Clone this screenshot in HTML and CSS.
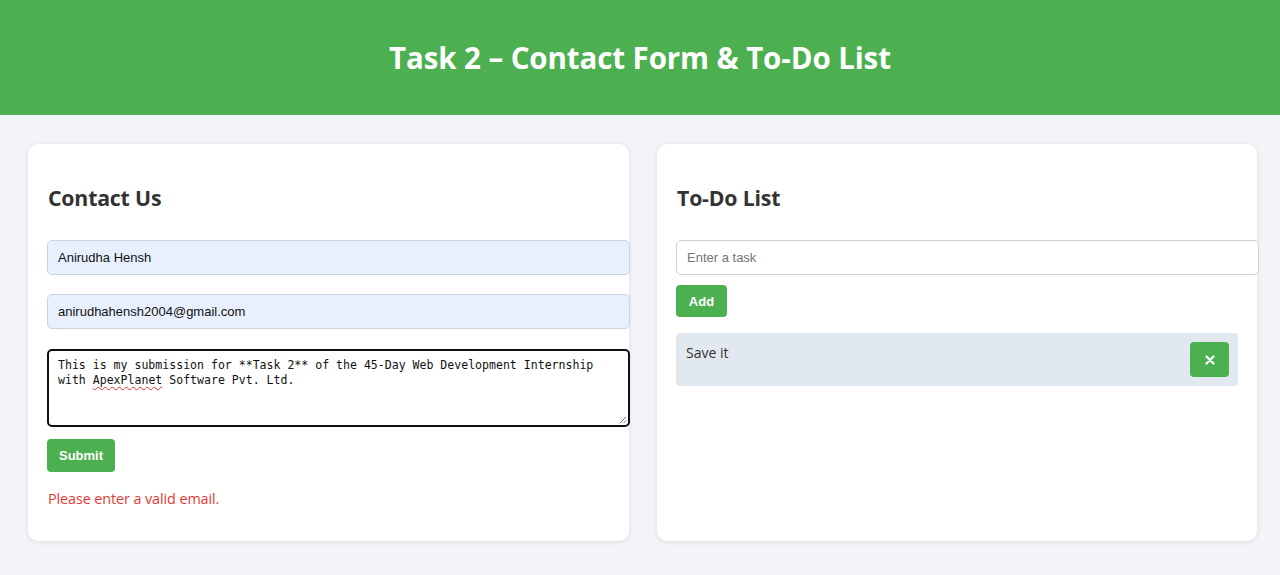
FILE: index.html
```html
<!DOCTYPE html>
<html lang="en">
<head>
<meta charset="utf-8">
<title>Task 2</title>
<link rel="stylesheet" href="styles.css">
</head>
<body>
<header class="top">
  <h1 class="title">Task 2 – Contact Form &amp; To-Do List</h1>
</header>
<main class="main">
  <section class="card">
    <h2 class="card-title">Contact Us</h2>
    <form class="form">
      <input class="field filled" type="text" value="Anirudha Hensh">
      <input class="field filled" type="text" value="anirudhahensh2004@gmail.com">
      <div class="area" role="textbox">This is my submission for **Task 2** of the 45-Day Web Development Internship<br>with <span class="spell">ApexPlanet</span> Software Pvt. Ltd.<svg class="grip" width="8" height="8" viewBox="0 0 8 8"><path d="M7 1L1 7M7 4.5L4.5 7" stroke="#777" stroke-width="1" fill="none"/></svg></div>
      <button class="btn submit" type="button">Submit</button>
    </form>
    <p class="error">Please enter a valid email.</p>
  </section>
  <section class="card">
    <h2 class="card-title">To-Do List</h2>
    <input class="field task" type="text" placeholder="Enter a task">
    <button class="btn add" type="button">Add</button>
    <ul class="list">
      <li class="item">
        <span class="item-text">Save it</span>
        <button class="btn del" type="button" aria-label="Delete"><svg width="10" height="10" viewBox="0 0 10 10"><path d="M1.5 1.5L8.5 8.5M8.5 1.5L1.5 8.5" stroke="#fff" stroke-width="2.2" stroke-linecap="round"/></svg></button>
      </li>
    </ul>
  </section>
</main>
</body>
</html>
```
FILE: styles.css
```css
* { box-sizing: border-box; }
html, body { margin: 0; padding: 0; }
body {
  background: #f2f4f7;
  font-family: "Open Sans", "Noto Sans", sans-serif;
  color: #333;
  height: 575px;
  overflow: hidden;
}
.top {
  background: #4caf50;
  height: 115px;
  display: flex;
  align-items: center;
  justify-content: center;
}
.title {
  margin: 0;
  color: #fff;
  font-size: 29.5px;
  font-weight: 700;
  letter-spacing: -0.1px;
}
.main {
  display: grid;
  grid-template-columns: 601px 600px;
  column-gap: 28px;
  padding: 29px 0 0 28px;
}
.card {
  background: #fff;
  border-radius: 10px;
  box-shadow: 0 1px 5px rgba(0,0,0,0.10);
  padding: 20px 20px 0 20px;
  height: 397px;
}
.card-title {
  margin: 20px 0 0 0;
  font-size: 21.3px;
  line-height: 28px;
  font-weight: 700;
  color: #333;
  letter-spacing: -0.2px;
}
.form { display: flex; flex-direction: column; align-items: flex-start; }
.field {
  display: block;
  width: 583px;
  height: 35px;
  margin: 0 0 0 -1px;
  padding: 0 10px;
  border: 1px solid #ccc;
  border-radius: 5px;
  font-family: "Liberation Sans", Arial, sans-serif;
  font-size: 13px;
  color: #111;
  background: #fff;
  outline: none;
}
.filled { background: #e8f0fe; border-color: #cdd3dc; }
.form .field:first-child { margin-top: 28px; }
.form .field + .field { margin-top: 19px; }
.area {
  position: relative;
  width: 583px;
  height: 78px;
  margin: 20px 0 0 -1px;
  padding: 7px 9px;
  border: 2px solid #111;
  border-radius: 5px;
  font-family: "DejaVu Sans Mono", "Liberation Mono", monospace;
  font-size: 11.55px;
  line-height: 15px;
  color: #111;
  white-space: nowrap;
}
.spell {
  text-decoration: underline wavy #e03030;
  text-decoration-thickness: 1px;
  text-underline-offset: 2px;
}
.grip { position: absolute; right: 1px; bottom: 1px; }
.btn {
  border: none;
  background: #4caf50;
  color: #fff;
  font-family: "Liberation Sans", Arial, sans-serif;
  font-weight: 700;
  font-size: 13px;
  border-radius: 4px;
  cursor: pointer;
}
.submit { margin: 12px 0 0 -1px; width: 68px; height: 33px; }
.error {
  margin: 17px 0 0 0;
  color: #e53935;
  font-size: 14.4px;
  line-height: 20px;
  letter-spacing: -0.1px;
}
.task { margin-top: 28px; border-color: #d0d0d0; }
.task::placeholder { color: #757575; }
.add { display: block; margin: 10px 0 0 -1px; width: 51px; height: 32px; }
.list { list-style: none; margin: 16px 0 0 -1px; padding: 0; }
.item {
  width: 562px;
  height: 53px;
  background: #e2e8f0;
  border-radius: 4px;
  padding: 9px 9px 0 10px;
  display: flex;
  justify-content: space-between;
  align-items: flex-start;
}
.item-text { font-size: 14px; line-height: 22px; color: #333; }
.del {
  width: 39px;
  height: 35px;
  display: flex;
  align-items: center;
  justify-content: center;
  padding: 0;
}
```
